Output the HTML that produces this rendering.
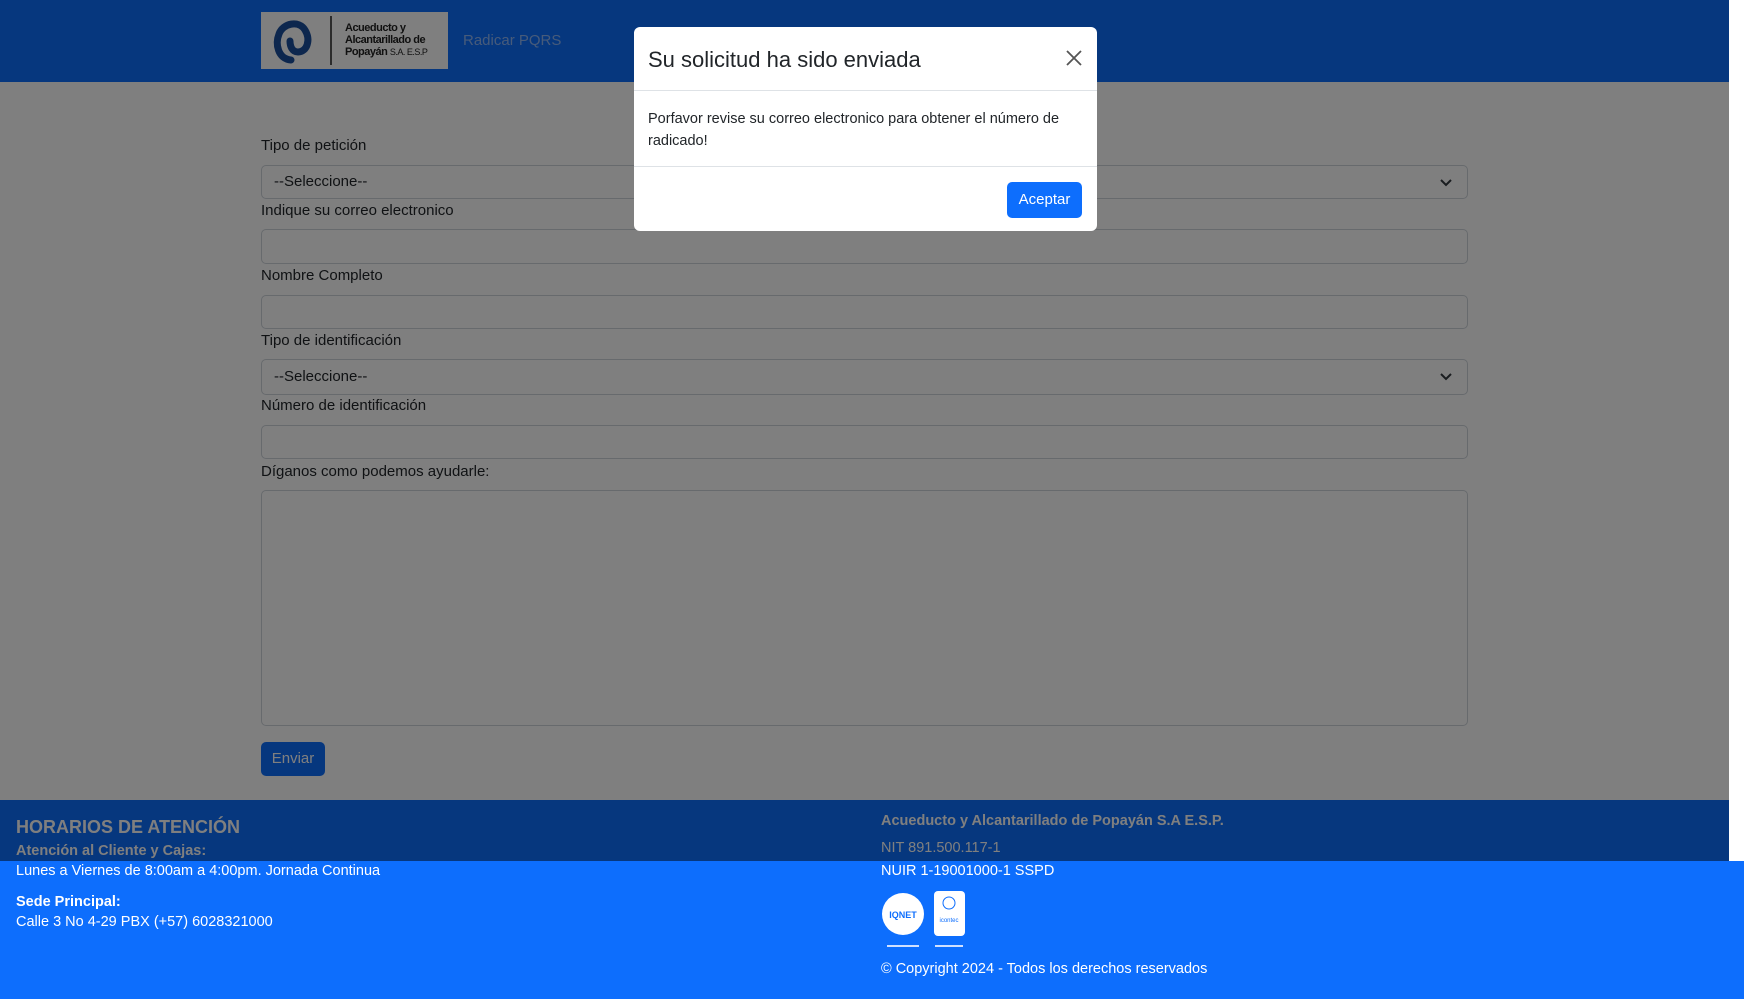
<!DOCTYPE html>
<html><head><meta charset="utf-8"><style>
*{box-sizing:border-box;margin:0;padding:0}
body{width:1744px;height:999px;overflow:hidden;background:#fff;font-family:"Liberation Sans",sans-serif;position:relative;color:#212529}
.hdr{position:absolute;left:0;top:0;width:1729px;height:82px;background:#0d6efd}
.logo{position:absolute;left:261px;top:12px;width:187px;height:57px;background:#fff}
.nav{position:absolute;left:463px;top:32px;font-size:15px;color:#8fb6f5}
.lbl{position:absolute;left:261px;font-size:15px;color:#212529}
.inp{position:absolute;left:261px;width:1207px;border:1px solid #ced4da;border-radius:5px;background:#fff;font-size:15px;padding-left:12px;color:#212529;line-height:32px}
.chev{position:absolute;right:14px;top:9px}
.btn{position:absolute;background:#0d6efd;color:#fff;border-radius:5px;font-size:15px;text-align:center}
.ftr{position:absolute;left:0;top:800px;width:1729px;height:199px;background:#0d6efd;color:#fff}
.ftr2{position:absolute;left:0;top:861px;width:1744px;height:138px;background:#0d6efd}
.ftr div{position:absolute;white-space:nowrap}
.ov{position:absolute;left:0;top:0;width:1729px;height:861px;background:rgba(0,0,0,.5)}
.modal{position:absolute;left:634px;top:27px;width:463px;height:204px;background:#fff;border-radius:6px}
</style></head><body>
<div class="hdr"></div>
<div class="logo">
<svg width="187" height="57" viewBox="0 0 187 57"><rect width="187" height="57" fill="#fff"/>
<path d="M30 48 C17 47 14 32 18 22 C22 11 38 8 44 18 C50 28 46 40 37 40 C31 40 29 34 29 29" fill="none" stroke="#1a4f9c" stroke-width="7" stroke-linecap="round"/>
<line x1="70" y1="4" x2="70" y2="53" stroke="#222" stroke-width="1.5"/>
<text x="84" y="19" font-size="11" font-family="Liberation Sans" font-weight="bold" fill="#222" letter-spacing="-.5">Acueducto y</text>
<text x="84" y="31" font-size="11" font-family="Liberation Sans" font-weight="bold" fill="#222" letter-spacing="-.5">Alcantarillado de</text>
<text x="84" y="43" font-size="11" font-family="Liberation Sans" font-weight="bold" fill="#222" letter-spacing="-.5">Popayán <tspan font-weight="normal" font-size="9">S.A. E.S.P</tspan></text>
</svg></div>
<div class="nav">Radicar PQRS</div>

<div class="lbl" style="top:137px">Tipo de petición</div>
<div class="inp" style="top:165px;height:34px">--Seleccione--<svg class="chev" width="14" height="14" viewBox="0 0 14 14"><path d="M2 5l5 5 5-5" fill="none" stroke="#343a40" stroke-width="2"/></svg></div>
<div class="lbl" style="top:202px">Indique su correo electronico</div>
<div class="inp" style="top:229px;height:35px"></div>
<div class="lbl" style="top:267px">Nombre Completo</div>
<div class="inp" style="top:295px;height:34px"></div>
<div class="lbl" style="top:332px">Tipo de identificación</div>
<div class="inp" style="top:359px;height:36px;line-height:34px">--Seleccione--<svg class="chev" width="14" height="14" viewBox="0 0 14 14"><path d="M2 5l5 5 5-5" fill="none" stroke="#343a40" stroke-width="2"/></svg></div>
<div class="lbl" style="top:397px">Número de identificación</div>
<div class="inp" style="top:425px;height:34px"></div>
<div class="lbl" style="top:463px">Díganos como podemos ayudarle:</div>
<div class="inp" style="top:490px;height:236px"></div>
<div class="btn" style="left:261px;top:742px;width:64px;height:34px;line-height:34px">Enviar</div>

<div class="ftr2"></div>
<div class="ftr">
<div style="left:16px;top:17px;font-size:18px;font-weight:bold">HORARIOS DE ATENCIÓN</div>
<div style="left:16px;top:43px;font-size:14.5px;font-weight:bold">Atención al Cliente y Cajas:</div>
<div style="left:16px;top:63px;font-size:14.5px">Lunes a Viernes de 8:00am a 4:00pm. Jornada Continua</div>
<div style="left:16px;top:94px;font-size:14.5px;font-weight:bold">Sede Principal:</div>
<div style="left:16px;top:114px;font-size:14.5px">Calle 3 No 4-29 PBX (+57) 6028321000</div>
<div style="left:881px;top:13px;font-size:14.5px;font-weight:bold">Acueducto y Alcantarillado de Popayán S.A E.S.P.</div>
<div style="left:881px;top:40px;font-size:14.5px">NIT 891.500.117-1</div>
<div style="left:881px;top:63px;font-size:14.5px">NUIR 1-19001000-1 SSPD</div>
<div style="left:881px;top:90px"><svg width="90" height="62" viewBox="0 0 90 62"><circle cx="22" cy="24" r="21" fill="#fff"/><text x="22" y="28" font-size="9" text-anchor="middle" fill="#0d6efd" font-weight="bold" font-family="Liberation Sans">IQNET</text><rect x="53" y="1" width="31" height="45" rx="4" fill="#fff"/><circle cx="68" cy="13" r="6" fill="none" stroke="#0d6efd"/><text x="68" y="32" font-size="6" text-anchor="middle" fill="#0d6efd" font-family="Liberation Sans">icontec</text><rect x="6" y="55" width="32" height="2" fill="#cfe0ff"/><rect x="54" y="55" width="28" height="2" fill="#cfe0ff"/></svg></div>
<div style="left:881px;top:161px;font-size:14.5px">© Copyright 2024 - Todos los derechos reservados</div>
</div>

<div class="ov"></div>
<div class="modal">
<div style="position:absolute;left:14px;top:20px;font-size:22px;color:#212529">Su solicitud ha sido enviada</div>
<svg style="position:absolute;left:432px;top:23px" width="16" height="16" viewBox="0 0 16 16"><path d="M1 1l14 14M15 1L1 15" stroke="#555" stroke-width="1.8"/></svg>
<div style="position:absolute;left:0;top:63px;width:463px;border-top:1px solid #dee2e6"></div>
<div style="position:absolute;left:14px;top:81px;font-size:14.5px;line-height:22px;width:440px">Porfavor revise su correo electronico para obtener el número de radicado!</div>
<div style="position:absolute;left:0;top:139px;width:463px;border-top:1px solid #dee2e6"></div>
<div class="btn" style="left:373px;top:155px;width:75px;height:36px;line-height:36px">Aceptar</div>
</div>
</body></html>
